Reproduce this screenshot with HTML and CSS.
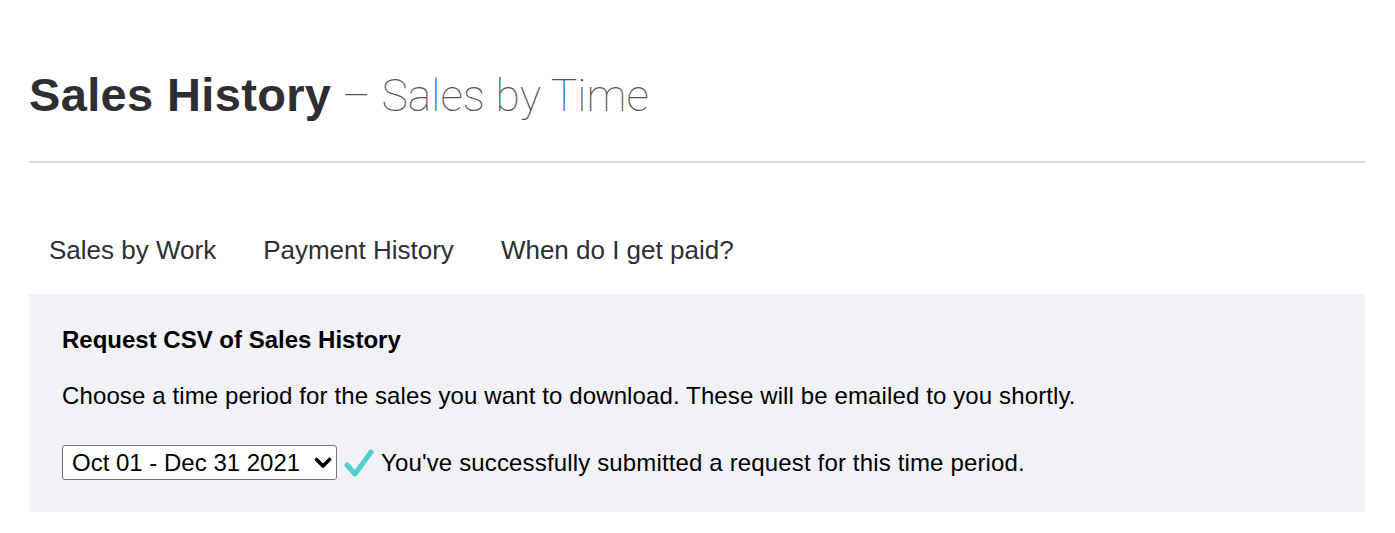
FILE: index.html
```html
<!DOCTYPE html>
<html>
<head>
<meta charset="utf-8">
<link rel="stylesheet" href="styles.css">
</head>
<body>
<div class="page">
  <h1 class="title"><span class="title-main">Sales History</span><span class="title-sub"> – Sales by Time</span></h1>
  <hr class="rule">
  <nav class="tabs">
    <a class="tab">Sales by Work</a>
    <a class="tab">Payment History</a>
    <a class="tab">When do I get paid?</a>
  </nav>
  <section class="panel">
    <h2 class="panel-title">Request CSV of Sales History</h2>
    <p class="panel-text">Choose a time period for the sales you want to download. These will be emailed to you shortly.</p>
    <div class="request-row">
      <div class="select-wrap">
        <select class="period">
          <option>Oct 01 - Dec 31 2021</option>
        </select>
        <svg class="chev" width="18" height="12" viewBox="0 0 18 12"><path d="M2.5 2.5 L9 9 L15.5 2.5" fill="none" stroke="#000" stroke-width="3.6" stroke-linecap="round" stroke-linejoin="round"/></svg>
      </div>
      <svg class="check" width="32" height="32" viewBox="0 0 32 32"><path d="M4 18 L12 27 L28 5" fill="none" stroke="#4ecfd0" stroke-width="5" stroke-linecap="round" stroke-linejoin="round"/></svg>
      <span class="success">You've successfully submitted a request for this time period.</span>
    </div>
  </section>
</div>
</body>
</html>
```
FILE: styles.css
```css
html, body {
  margin: 0;
  padding: 0;
  background: #fff;
}
body {
  font-family: "Liberation Sans", Arial, sans-serif;
  color: #2e2e33;
}
.page {
  padding: 0 30px 0 29px;
}
.title {
  margin: 0;
  padding-top: 66px;
  font-size: 47px;
  line-height: 58px;
  font-weight: normal;
  white-space: nowrap;
}
.title-main {
  font-weight: 700;
  color: #2e2e33;
  letter-spacing: 0.35px;
}
.title-sub {
  font-family: Roboto, "Liberation Sans", sans-serif;
  font-weight: 100;
  color: #555;
  font-size: 44.5px;
}
.rule {
  margin: 36px 0 0 0;
  border: 0;
  height: 2px;
  background: #d7dadd;
}
.tabs {
  display: flex;
  gap: 7px;
  margin-top: 69px;
  height: 36px;
  align-items: center;
}
.tab {
  padding: 0 20px;
  font-size: 26px;
  color: #2e2e33;
}
.panel {
  margin-top: 26px;
  background: #f1f1f6;
  padding: 30px 33px 32px 33px;
}
.panel-title {
  margin: 0;
  font-size: 24px;
  font-weight: 700;
  line-height: 32px;
  color: #000;
}
.panel-text {
  margin: 24px 0 0 0;
  font-size: 24px;
  letter-spacing: 0.12px;
  line-height: 32px;
  color: #000;
}
.request-row {
  margin-top: 33px;
  display: flex;
  align-items: center;
}
.select-wrap {
  position: relative;
  display: inline-block;
}
.period {
  appearance: none;
  -webkit-appearance: none;
  font-family: "Liberation Sans", Arial, sans-serif;
  font-size: 24px;
  color: #000;
  background: #fff;
  border: 1px solid #767676;
  border-radius: 3px;
  height: 35px;
  width: 275px;
  padding: 0 0 0 9px;
  margin: 0;
  display: block;
}
.chev {
  position: absolute;
  right: 5px;
  top: 12px;
  pointer-events: none;
}
.check {
  margin-left: 6px;
  margin-right: 6px;
}
.success {
  font-size: 24px;
  letter-spacing: 0.15px;
  color: #000;
}
```
